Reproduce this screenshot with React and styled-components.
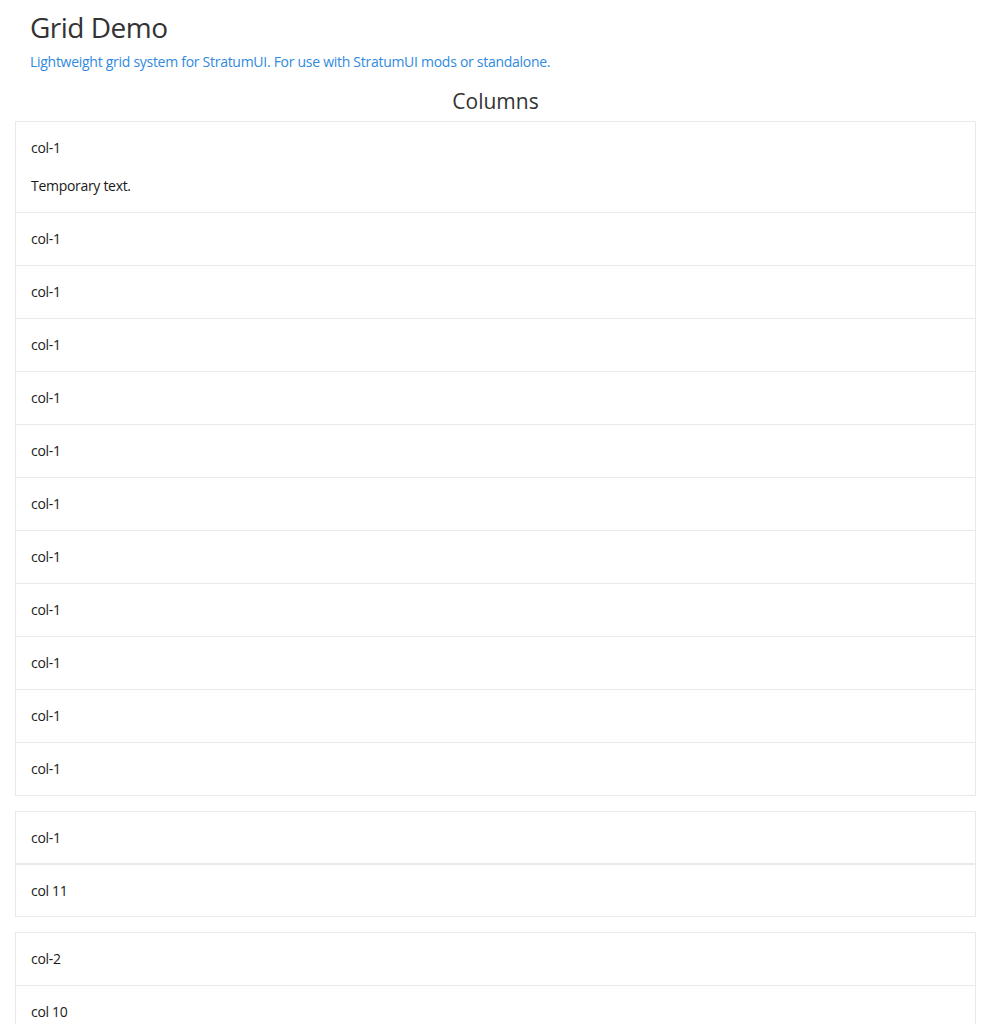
import React from "react";
import styled, { createGlobalStyle } from "styled-components";

const GlobalStyle = createGlobalStyle`
  html, body {
    margin: 0;
    padding: 0;
    background: #fff;
    font-family: "Open Sans", "Noto Sans", sans-serif;
    color: #222;
  }
`;

export default function App() {
  const singles = Array.from({ length: 11 }, () => "col-1");
  const pairs = [
    ["col-1", "col 11"],
    ["col-2", "col 10"],
  ];
  return (
    <Page>
      <GlobalStyle />
      <Header>
        <h1>Grid Demo</h1>
        <p>Lightweight grid system for StratumUI. For use with StratumUI mods or standalone.</p>
      </Header>
      <SectionTitle>Columns</SectionTitle>
      <Group>
        <Cell>
          col-1
          <Note>Temporary text.</Note>
        </Cell>
        {singles.map((label, i) => (
          <Cell key={i}>{label}</Cell>
        ))}
      </Group>
      {pairs.map((pair, i) => (
        <Group key={i} $split={i === 0}>
          {pair.map((label) => (
            <Cell key={label} $split={i === 0}>{label}</Cell>
          ))}
        </Group>
      ))}
    </Page>
  );
}

const Page = styled.div`
  padding: 0 15px;
`;

const Header = styled.header`
  padding: 0 15px;
  h1 {
    margin: 11px 0 0;
    font-size: 28px;
    font-weight: 400;
    line-height: 1.2;
    letter-spacing: -0.5px;
    color: #333;
  }
  p {
    margin: 7px 0 0;
    font-size: 14px;
    line-height: 20px;
    letter-spacing: -0.28px;
    color: #2f8ae0;
  }
`;

const SectionTitle = styled.h2`
  margin: 17px 0 7px;
  text-align: center;
  font-size: 21px;
  font-weight: 400;
  line-height: 1.2;
  color: #333;
`;

const Group = styled.div`
  border: 1px solid #e9e9e9;
  margin-bottom: 15px;
  ${(p) => p.$split && `border: none;`}
`;

const Cell = styled.div`
  padding: 16px 16px 16px 15px;
  font-size: 14px;
  line-height: 20px;
  letter-spacing: -0.3px;
  color: #1a1a1a;
  & + & {
    border-top: 1px solid #e9e9e9;
  }
  ${(p) =>
    p.$split &&
    `
    border: 1px solid #e9e9e9;
    padding: 16px 16px 15px 15px;
    & + & {
      border-top: 1px solid #e9e9e9;
    }
  `}
`;

const Note = styled.p`
  margin: 18px 0 0;
`;
